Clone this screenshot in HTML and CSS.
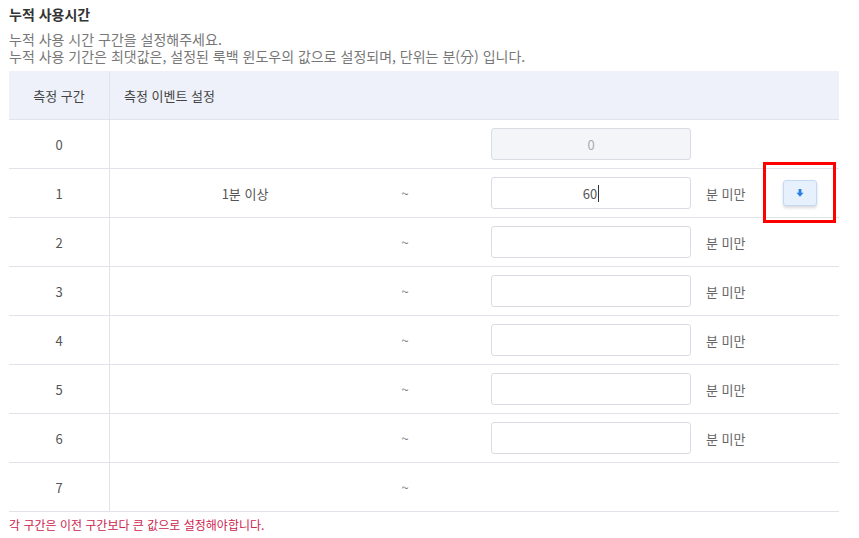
FILE: index.html
```html
<!DOCTYPE html>
<html lang="ko">
<head>
<meta charset="utf-8">
<link rel="stylesheet" href="styles.css">
</head>
<body>
<div class="page">
  <h1 class="title">누적 사용시간</h1>
  <p class="desc">누적 사용 시간 구간을 설정해주세요.<br>누적 사용 기간은 최댓값은, 설정된 룩백 윈도우의 값으로 설정되며, 단위는 분(分) 입니다.</p>
  <div class="table">
    <div class="row head">
      <div class="c-num">측정 구간</div>
      <div class="c-set head-set">측정 이벤트 설정</div>
    </div>
    <div class="row">
      <div class="c-num">0</div>
      <div class="c-set">
        <div class="c-from"></div><div class="c-tilde"></div>
        <div class="field disabled">0</div>
      </div>
    </div>
    <div class="row">
      <div class="c-num">1</div>
      <div class="c-set">
        <div class="c-from">1분 이상</div><div class="c-tilde">~</div>
        <div class="field">60<span class="caret"></span></div>
        <div class="unit">분 미만</div>
        <button class="btn" type="button"><svg width="8" height="8" viewBox="0 0 8 8"><path d="M2.6 0h2.8v3.8H7.6L4 7.8 0.4 3.8H2.6z" fill="#2b7fe0"/></svg></button>
      </div>
    </div>
    <div class="row">
      <div class="c-num">2</div>
      <div class="c-set"><div class="c-from"></div><div class="c-tilde">~</div><div class="field"></div><div class="unit">분 미만</div></div>
    </div>
    <div class="row">
      <div class="c-num">3</div>
      <div class="c-set"><div class="c-from"></div><div class="c-tilde">~</div><div class="field"></div><div class="unit">분 미만</div></div>
    </div>
    <div class="row">
      <div class="c-num">4</div>
      <div class="c-set"><div class="c-from"></div><div class="c-tilde">~</div><div class="field"></div><div class="unit">분 미만</div></div>
    </div>
    <div class="row">
      <div class="c-num">5</div>
      <div class="c-set"><div class="c-from"></div><div class="c-tilde">~</div><div class="field"></div><div class="unit">분 미만</div></div>
    </div>
    <div class="row">
      <div class="c-num">6</div>
      <div class="c-set"><div class="c-from"></div><div class="c-tilde">~</div><div class="field"></div><div class="unit">분 미만</div></div>
    </div>
    <div class="row">
      <div class="c-num">7</div>
      <div class="c-set"><div class="c-from"></div><div class="c-tilde">~</div></div>
    </div>
  </div>
  <p class="error">각 구간은 이전 구간보다 큰 값으로 설정해야합니다.</p>
  <div class="highlight"></div>
</div>
</body>
</html>
```
FILE: styles.css
```css
html, body {
  margin: 0;
  padding: 0;
  background: #fff;
}
body {
  font-family: "Noto Sans CJK KR", "Noto Sans", sans-serif;
  font-size: 13px;
  color: #555;
}
.page {
  position: relative;
  padding: 5px 20px 0 9px;
}
.title {
  margin: 0;
  font-size: 14px;
  line-height: 18px;
  font-weight: 700;
  color: #333;
}
.desc {
  margin: 8px 0 0;
  line-height: 17px;
  color: #777;
  font-size: 14px;
}
.table {
  margin-top: 6px;
  width: 830px;
}
.row {
  display: flex;
  height: 48px;
  border-bottom: 1px solid #e1e3ea;
  align-items: stretch;
}
.row.head {
  background: #eef1f9;
  color: #444;
}
.c-num {
  width: 100px;
  border-right: 1px solid #e1e3ea;
  display: flex;
  align-items: center;
  justify-content: center;
  color: #555;
}
.head .c-num { color: #444; }
.c-set {
  flex: 1;
  display: flex;
  align-items: center;
}
.head-set {
  padding-left: 14px;
}
.c-from {
  width: 270px;
  text-align: center;
  color: #555;
}
.c-tilde {
  width: 50px;
  text-align: center;
  color: #777;
}
.field {
  margin-left: 61px;
  width: 198px;
  height: 30px;
  border: 1px solid #d9dce4;
  border-radius: 3px;
  background: #fff;
  display: flex;
  align-items: center;
  justify-content: center;
  color: #555;
}
.field.disabled {
  background: #f4f5f9;
  color: #aaa;
}
.caret {
  display: inline-block;
  width: 1px;
  height: 17px;
  background: #333;
  margin-left: 1px;
}
.unit {
  margin-left: 15px;
  color: #666;
}
.btn {
  margin-left: 37px;
  width: 34px;
  height: 26px;
  padding: 0;
  border: 1px solid #c3daf6;
  border-radius: 3px;
  background: #e7f1fe;
  box-shadow: 0 2px 3px rgba(0, 0, 0, 0.15);
  display: flex;
  align-items: center;
  justify-content: center;
}
.error {
  margin: 4px 0 0;
  line-height: 17px;
  color: #cc2550;
  font-size: 12px;
}
.highlight {
  position: absolute;
  left: 763px;
  top: 162px;
  width: 67px;
  height: 55px;
  border: 3px solid #f00;
}
```
